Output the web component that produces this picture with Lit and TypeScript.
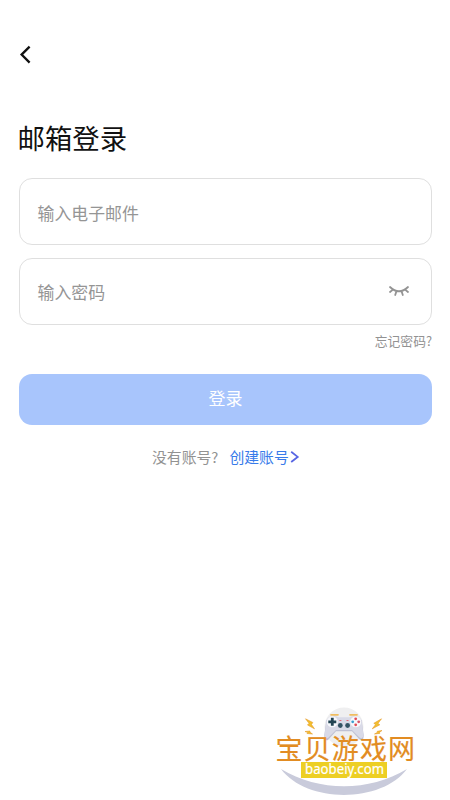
import { LitElement, html, css } from "lit";
import { customElement } from "lit/decorators.js";

@customElement("site-mark")
export class SiteMark extends LitElement {
  static styles = css`
    :host { display: block; width: 150px; height: 96px; }
    svg { display: block; }
    .name { font: 400 27px "Noto Sans CJK SC", sans-serif; fill: #e28c22; stroke: #e28c22; stroke-width: 0.15px; }
    .domain { font: 400 15px "Noto Sans", "Open Sans", sans-serif; fill: #fff; stroke: #fff; stroke-width: 0.2px; }
  `;

  render() {
    return html`
      <svg width="150" height="96" viewBox="270 704 150 96">
        <circle cx="344" cy="727" r="19.5" fill="#efeff0" />
        <path d="M281 769C319 792 369 792 407 769C382 803 307 804 281 769Z" fill="#c9cbdb" />
        <path d="M331 714.8h7M350 714.8h7" stroke="#f0bd60" stroke-width="1.7" stroke-linecap="round" />
        <path d="M326.5 720L324.3 735Q324.2 741.5 328 740L336 731.2H352L360 740Q363.8 741.5 363.7 735L361.5 720Z" fill="#bfc1d4" />
        <path d="M332 716Q336 715.5 338.5 717.3H349.5Q352 715.5 356 716Q361.5 717 362 723L363.4 735Q362.5 740 359.5 737.5L352 730H336L328.5 737.5Q325.5 740 324.6 735L326 723Q326.5 717 332 716Z" fill="#d9dae7" />
        <circle cx="332.3" cy="721.8" r="5.5" fill="#f7f8fc" />
        <circle cx="355.7" cy="721.8" r="5.5" fill="#f7f8fc" />
        <path d="M332.3 717.8v8M328.3 721.8h8" stroke="#234453" stroke-width="2.8" />
        <circle cx="340.3" cy="725.5" r="2.4" fill="#345364" />
        <circle cx="347.6" cy="725.5" r="2.4" fill="#345364" />
        <path d="M339.4 720.5h2M346.5 720.5h2" stroke="#e66a78" stroke-width="1.2" />
        <circle cx="355.7" cy="718.8" r="1.4" fill="#e24b57" />
        <circle cx="355.7" cy="724.8" r="1.4" fill="#e24b57" />
        <circle cx="352.7" cy="721.8" r="1.4" fill="#3c9ed0" />
        <circle cx="358.7" cy="721.8" r="1.4" fill="#d9536a" />
        <g fill="#f2c02e" stroke="#e59a2c" stroke-width="0.6">
          <path d="M305.5 718.8L312.8 722.5L311.5 724.5L314.5 728.8L307.5 725L309 723.3Z" />
          <path d="M305 731.5L310 731L309.8 732.1L312.5 734L307 733.5L307.8 732.5Z" />
          <path d="M381.5 718.8L373.8 723.3L375.6 724.5L372.3 728.8L379.8 724.8L378 723.4Z" />
          <path d="M382 730.5L377.2 731.3L377.5 732.3L374.5 734L379.8 733.4L379.5 732.3Z" />
        </g>
        <text class="name" x="275.5" y="758.5" textLength="139.5">宝贝游戏网</text>
        <rect x="301" y="762" width="86" height="16" fill="#edcf24" />
        <text class="domain" x="305" y="774.2" textLength="79" lengthAdjust="spacingAndGlyphs">baobeiy.com</text>
      </svg>
    `;
  }
}

@customElement("app-root")
export class AppRoot extends LitElement {
  static styles = css`
    :host {
      display: block;
      position: relative;
      box-sizing: border-box;
      height: 800px;
      padding: 42px 18px 0 19px;
      overflow: hidden;
      background: #fff;
      color: #111;
      font-family: "Noto Sans CJK SC", sans-serif;
    }
    svg { display: block; flex: none; }
    .back { display: block; padding: 0; border: 0; background: none; height: 25px; }
    h1 { margin: 50px 0 0 -1.5px; height: 40px; font-size: 27.4px; line-height: 40px; font-weight: 400; }
    form { display: flex; flex-direction: column; margin-top: 21px; }
    .field {
      display: flex;
      align-items: center;
      justify-content: space-between;
      box-sizing: border-box;
      height: 67px;
      padding: 2px 21px 0 17.5px;
      border: 1px solid #dfdfdf;
      border-radius: 13px;
      font-size: 16.9px;
      line-height: 24px;
      color: #959595;
    }
    .field + .field { margin-top: 12.5px; padding-top: 1px; }
    .forgot { align-self: flex-end; margin-top: 6px; font-size: 12.8px; line-height: 20px; color: #929292; }
    .submit {
      height: 51px;
      margin: 23px 0 0;
      padding: 0 0 2px;
      border: 0;
      border-radius: 13px;
      background: #a8c5fc;
      color: #fff;
      font: 400 17px/24px "Noto Sans CJK SC", sans-serif;
    }
    .signup { display: flex; align-items: center; margin: 20px 0 0 133px; font-size: 14.85px; line-height: 24px; color: #929292; }
    .create { display: flex; align-items: center; margin-left: 11px; color: #387bea; }
    site-mark { position: absolute; left: 270px; top: 704px; }
  `;

  render() {
    return html`
      <button class="back" aria-label="返回">
        <svg width="14" height="25" viewBox="0 0 14 25" fill="none" stroke="#111" stroke-width="2.3">
          <path d="M10.6 4.6L2.6 12.6L10.6 20.6" />
        </svg>
      </button>
      <h1>邮箱登录</h1>
      <form>
        <div class="field">输入电子邮件</div>
        <div class="field">
          输入密码
          <svg width="22" height="14" viewBox="0 0 22 14" fill="none" stroke="#939393" stroke-width="1.8" stroke-linecap="round">
            <path d="M2 2Q11 10.5 20 2M4.9 4.6L2 7M8.4 6.4L7.2 10M13.6 6.4L14.8 10M17.1 4.6L20 7" />
          </svg>
        </div>
        <div class="forgot">忘记密码?</div>
        <button class="submit" type="button">登录</button>
      </form>
      <div class="signup">
        没有账号?
        <span class="create">创建账号
          <svg width="12" height="14" viewBox="0 0 12 14" fill="none" stroke="#5866e3" stroke-width="1.8">
            <path d="M2.2 1.8L8.7 6.9L2.2 12" />
          </svg>
        </span>
      </div>
      <site-mark></site-mark>
    `;
  }
}
